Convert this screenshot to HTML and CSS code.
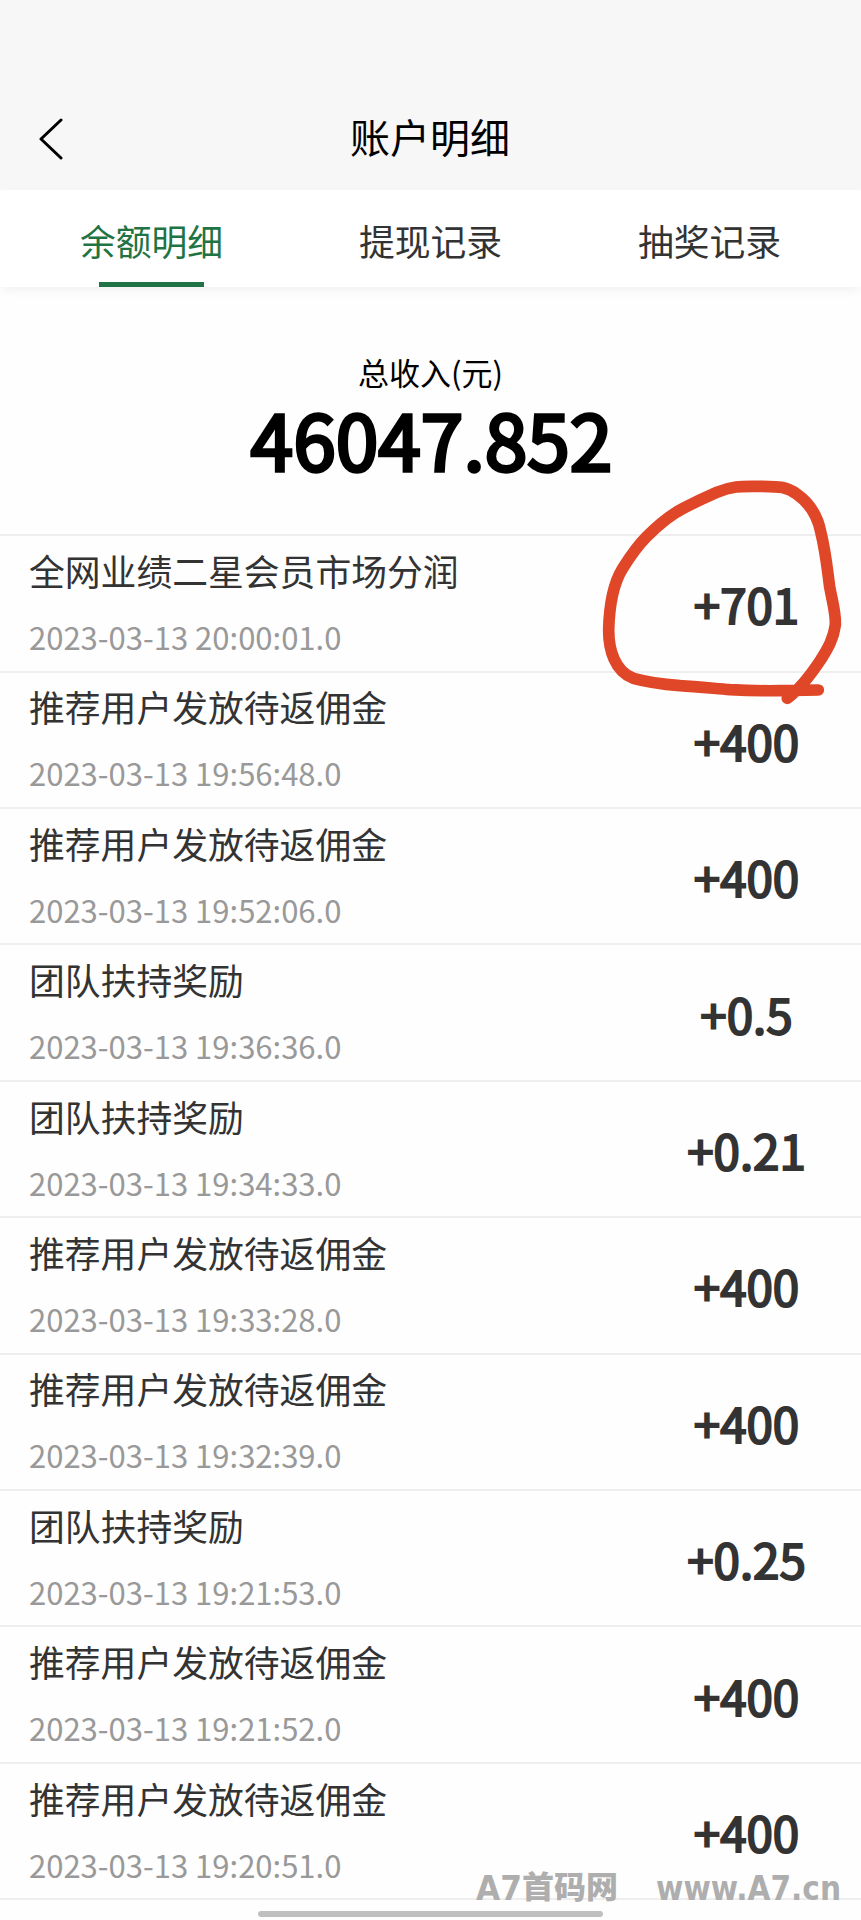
FILE: index.html
```html
<!DOCTYPE html>
<html lang="zh-CN">
<head>
<meta charset="utf-8">
<title>账户明细</title>
<link rel="stylesheet" href="styles.css">
</head>
<body>
<div class="page">
  <header class="header">
    <svg class="back" viewBox="0 0 24 42"><path d="M22 2 2 21 22 40"/></svg>
    <h1 class="title">账户明细</h1>
  </header>
  <nav class="tabs">
    <div class="tab active">余额明细</div>
    <div class="tab">提现记录</div>
    <div class="tab">抽奖记录</div>
  </nav>
  <section class="summary">
    <div class="label">总收入(元)</div>
    <div class="total">46047.852</div>
  </section>
  <main class="list">
    <div class="row"><div class="info"><div class="name">全网业绩二星会员市场分润</div><div class="date">2023-03-13 20:00:01.0</div></div><div class="amount">+701</div></div>
    <div class="row"><div class="info"><div class="name">推荐用户发放待返佣金</div><div class="date">2023-03-13 19:56:48.0</div></div><div class="amount">+400</div></div>
    <div class="row"><div class="info"><div class="name">推荐用户发放待返佣金</div><div class="date">2023-03-13 19:52:06.0</div></div><div class="amount">+400</div></div>
    <div class="row"><div class="info"><div class="name">团队扶持奖励</div><div class="date">2023-03-13 19:36:36.0</div></div><div class="amount">+0.5</div></div>
    <div class="row"><div class="info"><div class="name">团队扶持奖励</div><div class="date">2023-03-13 19:34:33.0</div></div><div class="amount">+0.21</div></div>
    <div class="row"><div class="info"><div class="name">推荐用户发放待返佣金</div><div class="date">2023-03-13 19:33:28.0</div></div><div class="amount">+400</div></div>
    <div class="row"><div class="info"><div class="name">推荐用户发放待返佣金</div><div class="date">2023-03-13 19:32:39.0</div></div><div class="amount">+400</div></div>
    <div class="row"><div class="info"><div class="name">团队扶持奖励</div><div class="date">2023-03-13 19:21:53.0</div></div><div class="amount">+0.25</div></div>
    <div class="row"><div class="info"><div class="name">推荐用户发放待返佣金</div><div class="date">2023-03-13 19:21:52.0</div></div><div class="amount">+400</div></div>
    <div class="row"><div class="info"><div class="name">推荐用户发放待返佣金</div><div class="date">2023-03-13 19:20:51.0</div></div><div class="amount">+400</div></div>
  </main>
  <footer class="bottom"><div class="home-bar"></div></footer>

  <svg class="circle" viewBox="0 0 843 780">
    <path d="M715 690 L600 692 Q520 693 450 689 C400 685 350 680 300 677 C240 672 200 666 160 655 C105 635 86 570 86 510 C88 430 100 370 128 325 C150 290 180 250 200 230 C240 190 280 160 310 145 C350 124 380 110 410 97 C460 76 490 79 540 79 C600 80 620 80 650 102 C690 130 712 165 722 215 C738 280 742 330 749 380 C758 430 768 460 766 495 C760 540 740 570 725 595 C705 625 670 680 622 715"/>
  </svg>
  <svg class="watermark" viewBox="0 0 385 60">
    <text class="latin" x="1" y="39.5" textLength="46" lengthAdjust="spacingAndGlyphs">A7</text>
    <text class="han" x="47" y="37.5" textLength="96" lengthAdjust="spacingAndGlyphs">首码网</text>
    <text class="latin" x="181" y="39.5" textLength="185" lengthAdjust="spacingAndGlyphs">www.A7.cn</text>
  </svg>
</div>
</body>
</html>
```
FILE: styles.css
```css
* { box-sizing: border-box; }
body {
  margin: 0;
  background: #fefefe;
  color: #333;
  font-family: "Noto Sans CJK SC", sans-serif;
}
.page {
  position: relative;
  width: 861px;
  height: 1920px;
  overflow: hidden;
  display: flex;
  flex-direction: column;
}
.header {
  height: 190px;
  padding-top: 88px;
  background: #f7f7f7;
  display: grid;
  grid-template-columns: 100px 1fr 100px;
  align-items: center;
}
.back {
  width: 24px;
  height: 42px;
  margin-left: 39px;
  fill: none;
  stroke: #000;
  stroke-width: 3;
  stroke-linecap: round;
  stroke-linejoin: round;
}
.title {
  margin: 0 1px 6px 0;
  font-size: 40px;
  line-height: 60px;
  font-weight: 400;
  color: #000;
  text-align: center;
}
.tabs {
  height: 97px;
  padding: 0 12px;
  background: #fff;
  display: grid;
  grid-template-columns: repeat(3, 1fr);
  box-shadow: 0 5px 10px -2px rgba(0, 0, 0, .06);
}
.tab {
  display: flex;
  flex-direction: column;
  align-items: center;
  justify-content: space-between;
  padding-top: 23px;
  font-size: 35.8px;
  line-height: 54px;
}
.active { color: #1f7344; }
.active::after {
  content: "";
  width: 105px;
  height: 5px;
  background: #1f7344;
}
.summary {
  height: 247.3px;
  padding-top: 62px;
  color: #000;
  text-align: center;
}
.label { font-size: 31px; line-height: 46px; }
.total {
  padding-left: 2px;
  font-size: 76.7px;
  line-height: 85px;
  -webkit-text-stroke: 3.4px #000;
}
.list { border-bottom: 2px solid #eee; }
.row {
  height: 136.4px;
  border-top: 2px solid #eee;
  display: grid;
  grid-template-columns: 632px 229px;
  align-items: center;
}
.info {
  padding: 0 0 4px 29px;
  display: flex;
  flex-direction: column;
  gap: 17px;
}
.name { font-size: 35.8px; line-height: 54px; }
.date { font-size: 31px; line-height: 46px; color: #999; }
.amount {
  padding-top: 2px;
  font-size: 47.5px;
  line-height: 70px;
  text-align: center;
  -webkit-text-stroke: 2px #333;
}
.bottom { display: flex; justify-content: center; padding-top: 11px; }
.home-bar { width: 345px; height: 6px; border-radius: 3px; background: #c0c0c0; }
.circle {
  position: absolute;
  left: 580px;
  top: 460px;
  width: 281px;
  height: 260px;
  fill: none;
  stroke: #e04628;
  stroke-width: 35;
  stroke-linecap: round;
  stroke-linejoin: round;
}
.watermark {
  position: absolute;
  left: 475px;
  top: 1860px;
  width: 385px;
  height: 60px;
  fill: #aeaeae;
}
.latin { font: bold 33px "DejaVu Sans", sans-serif; }
.han { font: 900 31px "Noto Sans CJK SC", sans-serif; }
```
